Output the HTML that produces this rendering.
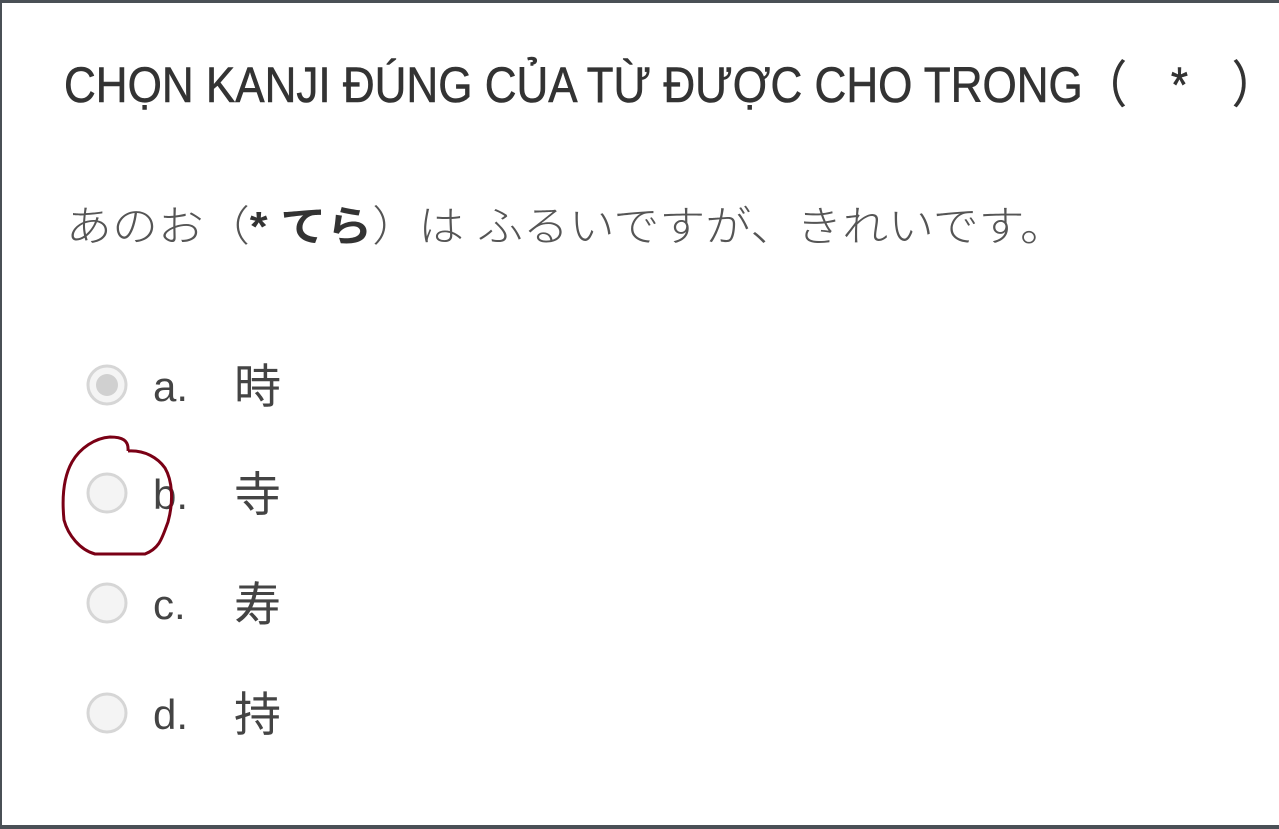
<!DOCTYPE html>
<html><head><meta charset="utf-8"><style>
html,body{margin:0;padding:0;background:#fff;width:1279px;height:829px;overflow:hidden}
</style></head><body>
<svg width="1279" height="829" viewBox="0 0 1279 829" xmlns="http://www.w3.org/2000/svg">
<rect x="0" y="0" width="1279" height="829" fill="#fff"/>
<rect x="0" y="0" width="1279" height="3" fill="#4a5056"/>
<rect x="0" y="0" width="2" height="829" fill="#4a5056"/>
<rect x="0" y="825" width="1279" height="4" fill="#4a5056"/>
<g font-family="Liberation Sans, Noto Sans CJK JP, sans-serif">
<text x="64" y="102" font-size="50" fill="#333" stroke="#333" stroke-width="0.6" textLength="1212" lengthAdjust="spacingAndGlyphs">CHỌN KANJI ĐÚNG CỦA TỪ ĐƯỢC CHO TRONG（　*　）</text>
<text x="66" y="241" font-size="42" fill="#555" font-weight="300" textLength="1000" lengthAdjust="spacingAndGlyphs">あのお（<tspan font-weight="bold" fill="#333">* てら</tspan>）は ふるいですが、きれいです。</text>
<g fill="#f4f4f4" stroke="#d6d6d6" stroke-width="3">
<circle cx="107" cy="385" r="19"/>
<circle cx="107" cy="493" r="19"/>
<circle cx="107" cy="603" r="19"/>
<circle cx="107" cy="713" r="19"/>
</g>
<circle cx="107" cy="385" r="11" fill="#d0d0d0"/>
<g font-size="42" fill="#444">
<text x="153" y="401">a.</text>
<text x="153" y="509">b.</text>
<text x="153" y="619">c.</text>
<text x="153" y="729">d.</text>
</g>
<g font-size="47" fill="#444">
<text x="234" y="403">時</text>
<text x="234" y="511">寺</text>
<text x="234" y="621">寿</text>
<text x="234" y="731">持</text>
</g>
</g>
<path d="M128,451 C129,440 122,437 110,437 C95,438 80,448 72,462 C63,478 62,500 64,520 C68,535 80,550 95,554 L145,554 C160,548 162,538 168,522 C174,500 172,480 165,468 C158,458 145,450 128,451" fill="none" stroke="#7a0015" stroke-width="3"/>
</svg>
</body></html>
